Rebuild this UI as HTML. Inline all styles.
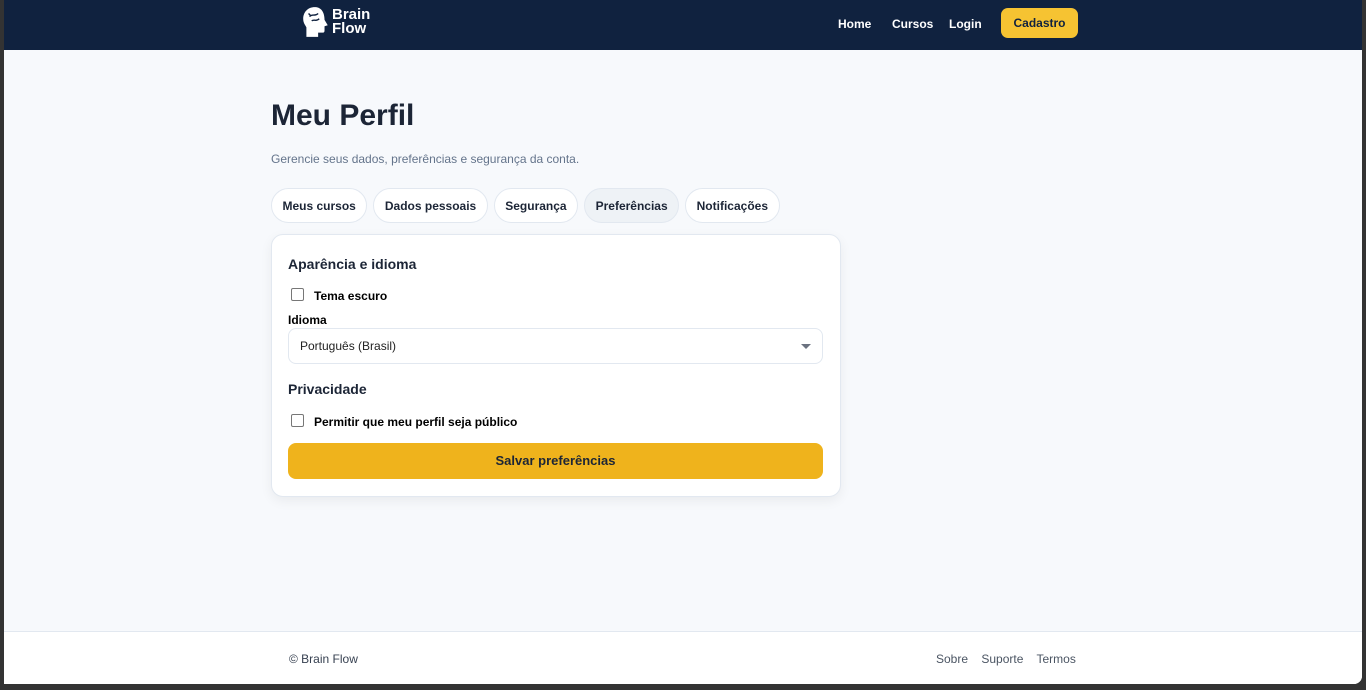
<!DOCTYPE html>
<html><head><meta charset="utf-8">
<style>
*{box-sizing:border-box;margin:0;padding:0}
html,body{width:1366px;height:690px;overflow:hidden;background:#333;font-family:"Liberation Sans",Arial,sans-serif}
.win{position:absolute;left:4px;top:0;width:1358px;height:684px;background:#f7f9fc;border-bottom-right-radius:8px;overflow:hidden}
.nav{position:absolute;left:0;top:0;width:100%;height:50px;background:#10223f}
.logo{position:absolute;left:298px;top:6px;display:flex;align-items:center;color:#fff;font-weight:bold;font-size:15px;line-height:14px}
.nav .l{position:absolute;top:17px;font-size:12px;font-weight:bold;color:#fff}
.btn{position:absolute;left:997px;top:8px;background:#f6c332;color:#10223f;border-radius:7px;width:77px;height:30px;line-height:30px;text-align:center;font-size:12px;font-weight:bold}
h1{position:absolute;left:267px;top:99px;font-size:30px;color:#1c2536;font-weight:bold}
.sub{position:absolute;left:267px;top:152px;font-size:12px;color:#64748b}
.tabs{position:absolute;left:267px;top:188px;display:flex;gap:6px}
.tab{height:35px;border:1px solid #e2e8f0;border-radius:18px;background:#fff;padding:0 10.5px;display:flex;align-items:center;font-size:12px;font-weight:bold;color:#1c2536}
.tab.act{background:#eef2f6}
.card{position:absolute;left:267px;top:234px;width:570px;height:263px;background:#fff;border:1px solid #e2e8f0;border-radius:12px;box-shadow:0 4px 12px rgba(0,0,0,.06)}
.h{position:absolute;left:16px;font-size:14px;font-weight:bold;color:#1c2536}
.cb{position:absolute;left:19px;width:13px;height:13px;border:1px solid #777;border-radius:2px;background:#fff}
.cl{position:absolute;left:42px;font-size:12px;font-weight:bold;color:#000}
.sel{position:absolute;left:16px;top:93px;width:535px;height:36px;border:1px solid #e2e8f0;border-radius:8px;font-size:12px;color:#222;padding:10px 11px}
.sel:after{content:"";position:absolute;right:11px;top:15px;border-left:5px solid transparent;border-right:5px solid transparent;border-top:5px solid #6b7280}
.save{position:absolute;left:16px;top:208px;width:535px;height:36px;background:#efb31c;border-radius:8px;text-align:center;line-height:36px;font-size:13px;font-weight:bold;color:#1c2536}
.foot{position:absolute;left:0;top:631px;width:100%;height:53px;background:#fff;border-top:1px solid #e2e8f0;font-size:12px;color:#374151}
</style></head><body>
<div class="win">
<div class="nav">
 <div class="logo">
  <svg width="28" height="32" viewBox="0 0 26 30"><path d="M12 1C5 1 1 6 1 12c0 4 2 6 3 8v9h11v-4h4c2 0 2-1 2-3v-3l3-1-3-5C21 6 18 1 12 1z" fill="#fff"/><path d="M7 10c2-3 5 0 8-3M9 14c2-2 4 1 7-2M6 7l2 2" stroke="#10223f" stroke-width="1.3" fill="none"/></svg>
  <div style="margin-left:2px">Brain<br>Flow</div>
 </div>
 <div class="l" style="left:834px">Home</div><div class="l" style="left:888px">Cursos</div><div class="l" style="left:945px">Login</div><div class="btn">Cadastro</div>
</div>
<h1>Meu Perfil</h1>
<div class="sub">Gerencie seus dados, preferências e segurança da conta.</div>
<div class="tabs"><div class="tab">Meus cursos</div><div class="tab">Dados pessoais</div><div class="tab">Segurança</div><div class="tab act">Preferências</div><div class="tab">Notificações</div></div>
<div class="card">
 <div class="h" style="top:21px">Aparência e idioma</div>
 <div class="cb" style="top:53px"></div><div class="cl" style="top:54px">Tema escuro</div>
 <div class="cl" style="left:16px;top:78px">Idioma</div>
 <div class="sel">Português (Brasil)</div>
 <div class="h" style="top:146px">Privacidade</div>
 <div class="cb" style="top:179px"></div><div class="cl" style="top:180px">Permitir que meu perfil seja público</div>
 <div class="save">Salvar preferências</div>
</div>
<div class="foot">
 <div style="position:absolute;left:285px;top:20px">© Brain Flow</div>
 <div style="position:absolute;left:932px;top:20px;color:#4b5563">Sobre &nbsp;&nbsp; Suporte &nbsp;&nbsp; Termos</div>
</div>
</div>
</body></html>
